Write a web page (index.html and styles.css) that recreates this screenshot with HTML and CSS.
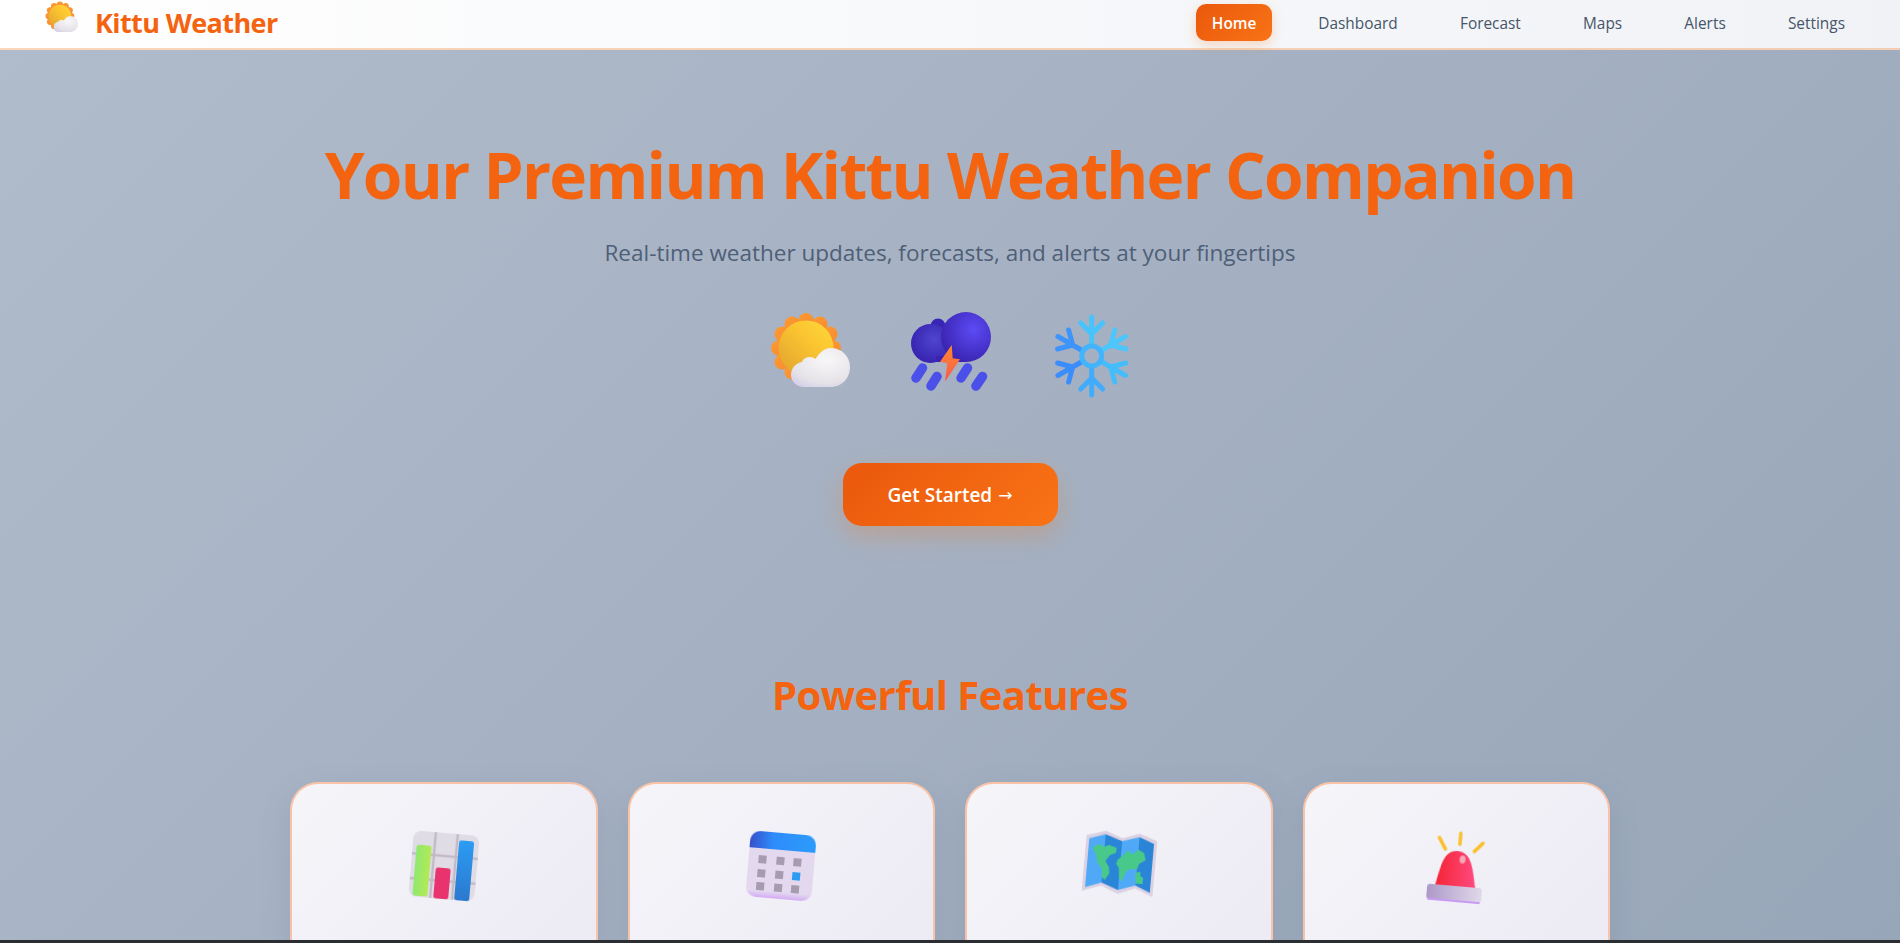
FILE: index.html
```html
<!DOCTYPE html>
<html lang="en">
<head>
<meta charset="utf-8">
<title>Kittu Weather</title>
<link rel="stylesheet" href="styles.css">
</head>
<body>
<svg class="defs" width="0" height="0" aria-hidden="true">
  <defs>
    <linearGradient id="sunFill" x1="0" y1="1" x2="1" y2="0"><stop offset="0" stop-color="#dfa02f"/><stop offset=".6" stop-color="#fbc531"/><stop offset="1" stop-color="#ffd83a"/></linearGradient>
    <linearGradient id="petal" x1="0" y1="0" x2="1" y2="1"><stop offset="0" stop-color="#ff9a2e"/><stop offset="1" stop-color="#f58b33"/></linearGradient>
    <radialGradient id="cloudFill" cx=".6" cy=".3" r=".9"><stop offset="0" stop-color="#f8f7f8"/><stop offset=".65" stop-color="#e6e3e8"/><stop offset="1" stop-color="#cfc6e8"/></radialGradient>
    <radialGradient id="stormA" cx=".65" cy=".35" r=".7"><stop offset="0" stop-color="#5b4bf5"/><stop offset="1" stop-color="#3a23b0"/></radialGradient>
    <radialGradient id="stormB" cx=".6" cy=".4" r=".7"><stop offset="0" stop-color="#4f45cf"/><stop offset="1" stop-color="#3420ad"/></radialGradient>
    <linearGradient id="bolt" x1="0" y1="0" x2="0" y2="1"><stop offset="0" stop-color="#ff8b2c"/><stop offset="1" stop-color="#f9574f"/></linearGradient>
    <linearGradient id="green" x1="0" y1="0" x2="1" y2="0"><stop offset="0" stop-color="#8fe870"/><stop offset="1" stop-color="#b3ea55"/></linearGradient>
    <linearGradient id="blueBar" x1="0" y1="0" x2="0" y2="1"><stop offset="0" stop-color="#2b9cf2"/><stop offset="1" stop-color="#2c78cf"/></linearGradient>
    <linearGradient id="calHead" x1="0" y1="0" x2="1" y2="0"><stop offset="0" stop-color="#3650cc"/><stop offset=".35" stop-color="#2e8cfb"/><stop offset="1" stop-color="#2b9cfb"/></linearGradient>
    <linearGradient id="calBody" x1="0" y1="0" x2="0" y2="1"><stop offset="0" stop-color="#e3d9ef"/><stop offset=".9" stop-color="#e3d8ee"/><stop offset="1" stop-color="#d3abf5"/></linearGradient>
    <linearGradient id="dome" x1="0" y1="0" x2="1" y2="0"><stop offset="0" stop-color="#f52637"/><stop offset="1" stop-color="#ff4a80"/></linearGradient>
    <linearGradient id="base" x1="0" y1="0" x2="1" y2="0"><stop offset="0" stop-color="#ad99c8"/><stop offset="1" stop-color="#e0d8ea"/></linearGradient>
    <symbol id="i-sun" viewBox="0 0 80 80" overflow="visible">
      <g fill="url(#petal)">
        <circle cx="36" cy="34" r="30"/>
        <circle cx="36" cy="6.500" r="7.500"/><circle cx="50" cy="10" r="7.500"/><circle cx="60" cy="20" r="7.500"/><circle cx="63.500" cy="34" r="7.500"/><circle cx="60" cy="48" r="7.500"/><circle cx="50" cy="58" r="7.500"/><circle cx="36" cy="61.500" r="7.500"/><circle cx="22" cy="58" r="7.500"/><circle cx="12" cy="48" r="7.500"/><circle cx="8.500" cy="34" r="7.500"/><circle cx="12" cy="20" r="7.500"/><circle cx="22" cy="10" r="7.500"/>
      </g>
      <circle cx="36" cy="34" r="27.500" fill="url(#sunFill)"/>
      <path d="M34 73c-8 0-13-6-13-12 0-7 5-12 11-13 1-3 4-5 8-5 2 0 4 .8 5.500 2 3-5 8-11 15-11 11 0 19.500 8 19.500 19 0 11-8 20-19 20z" fill="url(#cloudFill)"/>
    </symbol>
    <g id="flake-arm" fill="none" stroke-linecap="round">
      <path d="M0-12V-39M0-22L-11-33M0-22L11-33" stroke-width="5"/>
    </g>
  </defs>
</svg>

<div class="shell">
  <header class="nav">
    <a class="brand" href="#">
      <svg class="brand-icon" viewBox="0 0 80 80"><use href="#i-sun"/></svg>
      <span class="brand-name">Kittu Weather</span>
    </a>
    <nav class="links">
      <a class="link active" href="#">Home</a>
      <a class="link" href="#">Dashboard</a>
      <a class="link" href="#">Forecast</a>
      <a class="link" href="#">Maps</a>
      <a class="link" href="#">Alerts</a>
      <a class="link" href="#">Settings</a>
    </nav>
  </header>

  <main class="main">
    <section class="hero">
      <h1 class="hero-title">Your Premium Kittu Weather Companion</h1>
      <p class="hero-sub">Real-time weather updates, forecasts, and alerts at your fingertips</p>
      <div class="hero-icons">
        <svg class="hero-icon" viewBox="0 0 80 80"><use href="#i-sun"/></svg>
        <svg class="hero-icon" viewBox="0 0 80 80">
          <circle cx="28" cy="12" r="7.500" fill="#3a26b4"/>
          <circle cx="20.500" cy="29.500" r="19.500" fill="url(#stormB)"/>
          <path d="M26 48V42H56V48Z" fill="#3a23b0"/>
          <circle cx="56" cy="23" r="25" fill="url(#stormA)"/>
          <g stroke="#4a50e8" stroke-width="9.500" stroke-linecap="round">
            <path d="M12.500 54L6 64"/><path d="M27 62.500L21 72"/><path d="M57.500 54L51 64"/><path d="M72.500 62.500L66 72"/>
          </g>
          <path d="M41.700 31L30 47.700L37.300 49.300L35 67.700L50 45.300L42.700 44.300Z" fill="url(#bolt)"/>
        </svg>
        <svg class="hero-icon snow" viewBox="0 0 80 80">
          <g transform="translate(41.700 42)">
            <use href="#flake-arm" stroke="#46c4fb"/>
            <use href="#flake-arm" transform="rotate(60)" stroke="#4cc6fb"/>
            <use href="#flake-arm" transform="rotate(120)" stroke="#45bdfb"/>
            <use href="#flake-arm" transform="rotate(180)" stroke="#41acfb"/>
            <use href="#flake-arm" transform="rotate(240)" stroke="#3b8dfb"/>
            <use href="#flake-arm" transform="rotate(300)" stroke="#3d94fb"/>
            <circle r="10" fill="none" stroke="#42b4fb" stroke-width="5"/>
          </g>
        </svg>
      </div>
      <a class="cta" href="#">Get Started <span class="arrow">→</span></a>
    </section>

    <section class="features">
      <h2 class="features-title">Powerful Features</h2>
      <div class="grid">
        <article class="card">
          <svg class="card-icon" viewBox="0 0 80 80">
            <rect x="7" y="7" width="66" height="66" rx="8" fill="#e0dce6"/>
            <g stroke="#c2bac6" stroke-width="2.500"><path d="M7 30H73M7 55H73M29 7V73M51 7V73"/></g>
            <rect x="11" y="21" width="15" height="51" rx="2.500" fill="url(#green)"/>
            <rect x="32" y="42" width="15" height="31" rx="2.500" fill="#e8336f"/>
            <rect x="53" y="13" width="15" height="60" rx="2.500" fill="url(#blueBar)"/>
          </svg>
        </article>
        <article class="card">
          <svg class="card-icon" viewBox="0 0 80 80">
            <rect x="7" y="7" width="66" height="66" rx="10" fill="url(#calBody)"/>
            <path d="M7 24V17A10 10 0 0 1 17 7H63A10 10 0 0 1 73 17V24Z" fill="url(#calHead)"/>
            <g fill="#a59cb0">
              <rect x="17" y="31" width="8" height="8"/><rect x="35" y="31" width="8" height="8"/><rect x="52" y="31" width="8" height="8"/>
              <rect x="17" y="45" width="8" height="8"/><rect x="35" y="45" width="8" height="8"/>
              <rect x="17" y="58" width="8" height="8"/><rect x="35" y="58" width="8" height="8"/><rect x="52" y="58" width="8" height="8"/>
            </g>
            <rect x="52" y="45" width="8" height="8" fill="#2b9cf2"/>
          </svg>
        </article>
        <article class="card">
          <svg class="card-icon" viewBox="0 0 80 80">
            <path d="M5 12L24 6L41 12L58 6L76 12V68L58 61L41 68L24 61L5 68Z" fill="#dbd1e2"/>
            <path d="M8 15L24 9.500V58L8 64Z" fill="#4fa9f7"/>
            <path d="M24 9.500L41 15V64L24 58Z" fill="#2a85d6"/>
            <path d="M41 15L58 9.500V58L41 64Z" fill="#4fa9f7"/>
            <path d="M58 9.500L73 15V64L58 58Z" fill="#2a85d6"/>
            <g fill="#48c98a">
              <path d="M12 24L18 20L24 22L28 20L36 22L36 27L30 30L26 36L30 42L31 48L27 55L24 53L23 44L18 38L16 30Z"/>
              <path d="M38 34L44 28L48 24L53 27L58 22L64 25L66 32L60 36L58 42L52 42L48 44L44 55L41 52L40 42L37 38Z"/>
              <path d="M57 45L62 44L62 48L65 50L65 56L58 56Z"/>
            </g>
          </svg>
        </article>
        <article class="card">
          <svg class="card-icon" viewBox="0 0 80 80">
            <g stroke="#fbc02d" stroke-width="3.500" stroke-linecap="round" fill="none">
              <path d="M42 7V18"/><path d="M21 13L28 24"/><path d="M65 15L57 24"/>
            </g>
            <path d="M21 60C25 42 26 25 40.500 25C55 25 57 42 61 60Z" fill="url(#dome)"/>
            <ellipse cx="46" cy="33" rx="3" ry="4" fill="#f6a9b7"/>
            <rect x="13" y="60" width="55" height="15" rx="3" fill="url(#base)"/>
            <rect x="14" y="74" width="53" height="2" rx="1" fill="#c79bf4"/>
          </svg>
        </article>
      </div>
    </section>
  </main>
</div>
<div class="page-edge"></div>
</body>
</html>
```
FILE: styles.css
```css
* { box-sizing: border-box; }
html, body { margin: 0; height: 100%; overflow: hidden; background: #2a2d31; }
body { font-family: "Open Sans", "Noto Sans", sans-serif; }
a { text-decoration: none; }
.defs { position: absolute; }

.shell {
  height: 940px;
  overflow: hidden;
  background: linear-gradient(135deg, #b0bbcb 0%, #a5b1c2 50%, #98a6b9 100%);
}
.page-edge { height: 3px; background: #2a2d31; }

.nav {
  height: 50px;
  display: flex;
  align-items: center;
  justify-content: space-between;
  padding: 0 39px 3px 45px;
  background: linear-gradient(90deg, #ffffff 0%, #f0f2f6 100%);
  border-bottom: 2px solid rgba(249, 115, 22, .3);
}
.brand { display: flex; align-items: center; gap: 17px; color: #f4630f; }
.brand-icon { width: 33px; height: 33px; margin-top: -9px; overflow: visible; }
.brand-name { font-size: 27px; font-weight: 700; letter-spacing: -.6px; }
.links { display: flex; gap: 30.2px; align-items: center; }
.link {
  display: block;
  padding: 10px 16px 8px;
  height: 37px;
  border-radius: 10px;
  font-size: 15.4px;
  font-weight: 500;
  line-height: 19px;
  color: #475569;
}
.link.active {
  width: 76px;
  padding: 10px 0 8px;
  text-align: center;
  font-weight: 600;
  color: #fff;
  background: linear-gradient(135deg, #ea580c, #f97316);
  box-shadow: 0 4px 12px rgba(249, 115, 22, .25);
}

.hero { display: flex; flex-direction: column; align-items: center; padding-top: 84px; }
.hero-title { margin: 0; font-size: 64px; line-height: 82px; font-weight: 700; letter-spacing: -1.7px; color: #f4630f; }
.hero-sub { margin: 22px 0 0; font-size: 22.5px; line-height: 30px; color: #4f5f78; }
.hero-icons { display: flex; gap: 60px; margin-top: 46px; }
.hero-icon { display: block; width: 80px; height: 80px; overflow: visible; filter: blur(.3px); }
.cta {
  margin-top: 69px;
  width: 215px;
  height: 63px;
  display: flex;
  align-items: center;
  justify-content: center;
  gap: 6px;
  border-radius: 19px;
  font-size: 19px;
  font-weight: 600;
  color: #fff;
  background: linear-gradient(135deg, #ea580c, #f97316);
  box-shadow: 0 10px 25px rgba(249, 115, 22, .25);
}
.arrow { font-family: "DejaVu Sans", sans-serif; font-size: 17px; font-weight: 400; }

.features { margin-top: 140px; }
.features-title { margin: 0; text-align: center; font-size: 40px; line-height: 58px; font-weight: 700; letter-spacing: -.55px; color: #f4630f; }
.grid {
  width: 1320px;
  margin: 58px auto 0;
  display: grid;
  grid-template-columns: repeat(4, 1fr);
  gap: 30px;
}
.card {
  height: 320px;
  padding: 42px 0 0;
  display: flex;
  justify-content: center;
  align-items: flex-start;
  border: 2px solid rgba(249, 190, 160, .9);
  border-radius: 28px;
  background: linear-gradient(135deg, #f6f5f9, #e9e8f3);
  box-shadow: 0 10px 30px rgba(100, 116, 139, .2);
}
.card-icon { display: block; width: 80px; height: 80px; transform: rotate(5deg); filter: blur(.4px); }
```
